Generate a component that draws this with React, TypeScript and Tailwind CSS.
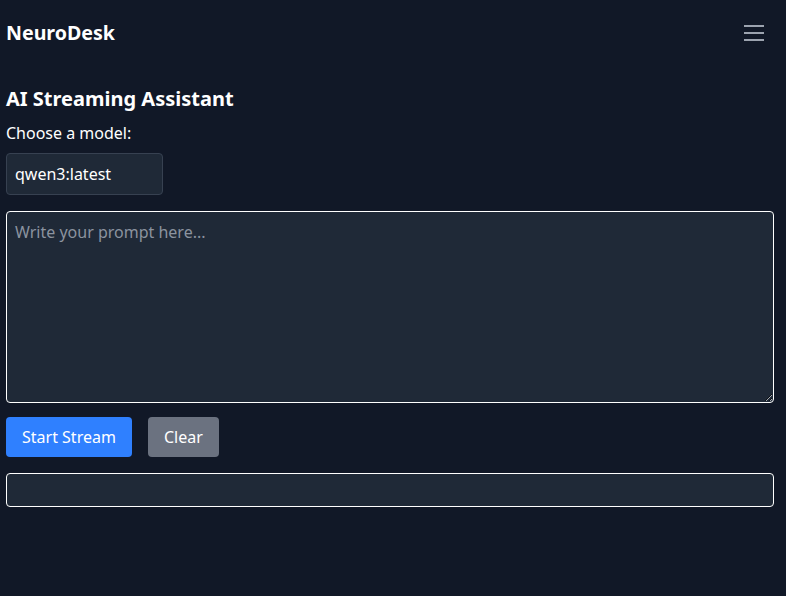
export default function App() {
  return (
    <div
      className="min-h-screen bg-[#111827] text-white"
      style={{ fontFamily: '"Noto Sans", sans-serif' }}
    >
      {/* Header */}
      <header className="flex h-[66px] items-center justify-between pl-[6px] pr-[22px]">
        <h1 className="text-[19.6px] font-bold">NeuroDesk</h1>
        <button className="flex flex-col gap-[5px]">
          <span className="block h-[2px] w-[20px] bg-[#9ca3af]" />
          <span className="block h-[2px] w-[20px] bg-[#9ca3af]" />
          <span className="block h-[2px] w-[20px] bg-[#9ca3af]" />
        </button>
      </header>

      <main className="pl-[6px] pr-[12px] pt-[19px]">
        <h2 className="text-[20px] font-bold leading-[28px]">AI Streaming Assistant</h2>
        <label className="mt-[8px] block text-[16px] leading-[24px]">Choose a model:</label>
        <select className="mt-[8px] h-[42px] w-[157px] appearance-none rounded border border-[#374151] bg-[#1f2937] px-[8px] text-[16px] text-white outline-none">
          <option>qwen3:latest</option>
        </select>

        {/* Prompt */}
        <textarea
          placeholder="Write your prompt here..."
          className="mt-[16px] block h-[192px] w-full rounded border border-white bg-[#1f2937] p-[8px] text-[16px] text-white placeholder:text-[#8b939f] outline-none"
        />

        <div className="mt-[14px] flex gap-4">
          <button className="h-[40px] rounded bg-[#2f80ff] px-[16px] text-[16px] text-white">
            Start Stream
          </button>
          <button className="h-[40px] rounded bg-[#6b7280] px-[16px] text-[16px] text-white">
            Clear
          </button>
        </div>

        {/* Output */}
        <div className="mt-[16px] h-[34px] w-full rounded border border-white bg-[#1f2937]" />
      </main>
    </div>
  );
}
